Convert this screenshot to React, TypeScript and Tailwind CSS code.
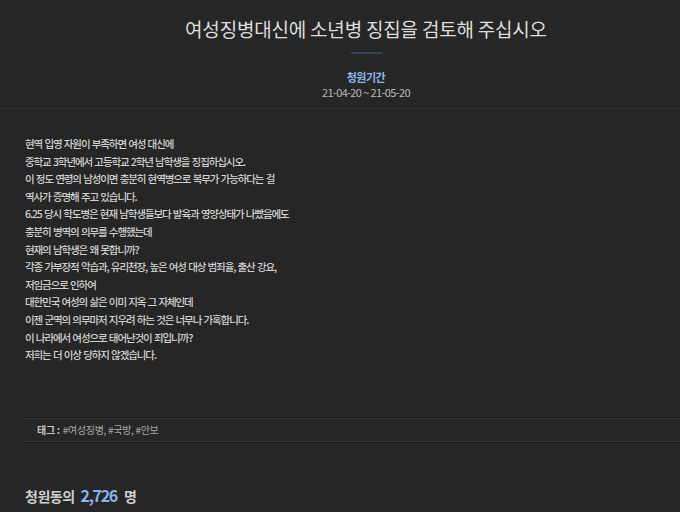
const body = [
  "현역 입영 자원이 부족하면 여성 대신에",
  "중학교 3학년에서 고등학교 2학년 남학생을 징집하십시오.",
  "이 정도 연령의 남성이면 충분히 현역병으로 복무가 가능하다는 걸",
  "역사가 증명해 주고 있습니다.",
  "6.25 당시 학도병은 현재 남학생들보다 발육과 영양상태가 나빴음에도",
  "충분히 병역의 의무를 수행했는데",
  "현재의 남학생은 왜 못합니까?",
  "각종 가부장적 악습과, 유리천장, 높은 여성 대상 범죄율, 출산 강요,",
  "저임금으로 인하여",
  "대한민국 여성의 삶은 이미 지옥 그 자체인데",
  "이젠 군역의 의무마저 지우려 하는 것은 너무나 가혹합니다.",
  "이 나라에서 여성으로 태어난것이 죄입니까?",
  "저희는 더 이상 당하지 않겠습니다.",
];

export default function App() {
  return (
    <div
      className="h-[512px] w-[680px] overflow-hidden bg-[#262626]"
      style={{ fontFamily: '"Noto Sans CJK KR", "Noto Sans", sans-serif' }}
    >
      <div className="w-[732px]">
        {/* header */}
        <div className="flex flex-col items-center border-b border-[#303030] pt-[15px] pb-[8px]">
          <h1 className="text-[19px] leading-[28px] font-normal tracking-[-0.2px] text-[#dedede]">
            여성징병대신에 소년병 징집을 검토해 주십시오
          </h1>
          <div className="mt-[9px] h-[2px] w-[31px] bg-[#34425a]" />
          <div className="mt-[16px] text-[11px] leading-[15px] font-bold tracking-[-0.5px] text-[#8db6ee]">
            청원기간
          </div>
          <div className="text-[11px] leading-[15px] tracking-[-0.6px] text-[#b9b9b9]">
            21-04-20 ~ 21-05-20
          </div>
        </div>

        {/* body */}
        <div className="px-[25px] pt-[26px]">
          <div className="text-[10.5px] leading-[17.6px] font-medium tracking-[-1.1px] [word-spacing:1px] text-[#d2d2d2]">
            {body.map((line) => (
              <p key={line}>{line}</p>
            ))}
          </div>

          {/* tags */}
          <div className="mt-[53px] border-y border-[#1c1c1c]">
            <div className="flex h-[24px] items-center border-y border-[#363636] pl-[12px] text-[10px] tracking-[-0.3px]">
              <span className="font-bold text-[#c4c4c4]">태그 :</span>
              <span className="ml-[3px] text-[#a6a6a6]">#여성징병, #국방, #안보</span>
            </div>
          </div>

          {/* count */}
          <div className="mt-[42px] flex items-baseline text-[14px] leading-[20px] font-bold text-[#cfcfcf]">
            <span className="tracking-[-0.5px]">청원동의</span>
            <span className="ml-[6px] text-[16px] tracking-[-1.3px] text-[#86b4f0]">2,726</span>
            <span className="ml-[7px]">명</span>
          </div>
        </div>
      </div>
    </div>
  );
}
